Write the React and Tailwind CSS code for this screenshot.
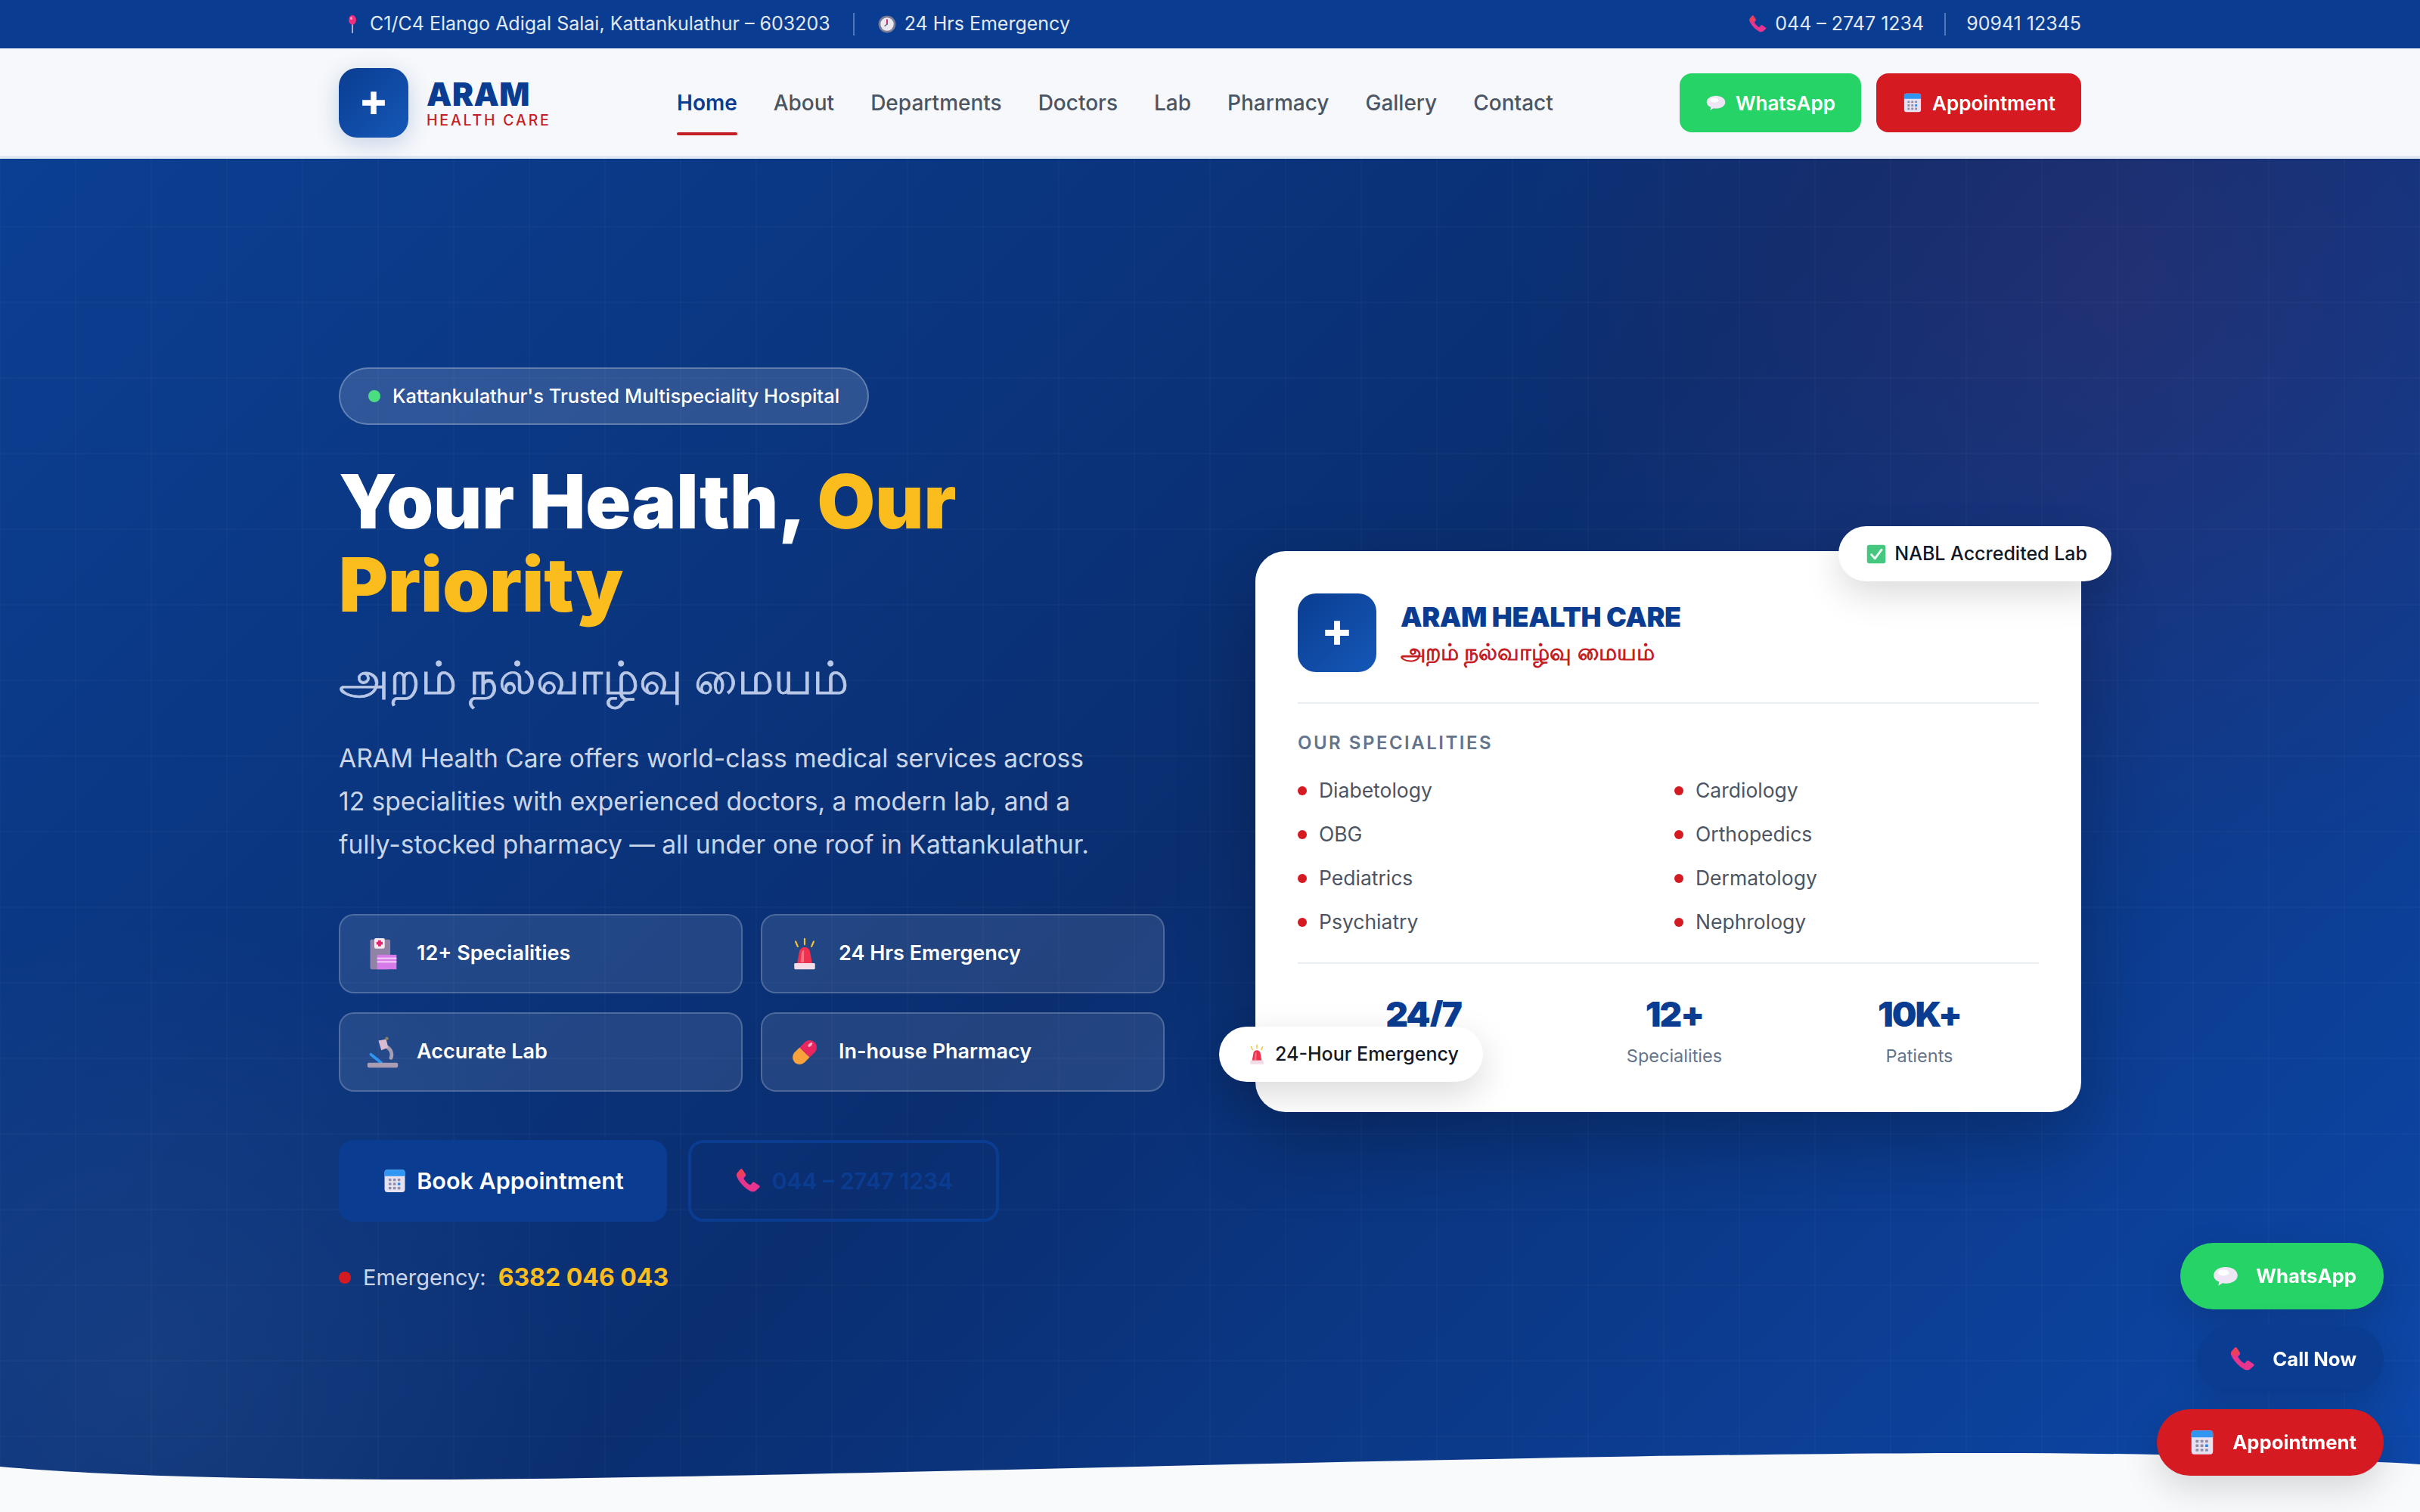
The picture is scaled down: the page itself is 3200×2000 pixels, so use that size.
import React from 'react';

// Emoji-like icons, drawn to match the reference
function PinIcon({ size = 24 }) {
  return (
    <svg width={size} height={size} viewBox="0 0 24 24" className="shrink-0">
      <rect x="11.2" y="9" width="1.6" height="14" rx="0.8" fill="#c9bfd0" />
      <ellipse cx="12" cy="6.8" rx="4.6" ry="5.8" fill="#ef2f7d" />
      <ellipse cx="10.6" cy="4.8" rx="1.4" ry="1.8" fill="#ff9cc2" />
    </svg>
  );
}

function ClockIcon({ size = 24 }) {
  return (
    <svg width={size} height={size} viewBox="0 0 24 24" className="shrink-0">
      <circle cx="12" cy="12" r="10.5" fill="#7a7f96" />
      <circle cx="12" cy="12" r="8" fill="#ece8ef" />
      <path d="M12 12V6.5" stroke="#c2185b" strokeWidth="1.6" strokeLinecap="round" />
      <path d="M12 12l-2.6 2" stroke="#6b6f84" strokeWidth="1.4" strokeLinecap="round" />
    </svg>
  );
}

function PhoneIcon({ size = 24 }) {
  return (
    <svg width={size} height={size} viewBox="0 0 24 24" className="shrink-0">
      <path d="M2.5 5.2 5.4 1.8c.5-.5 1.2-.5 1.6 0l3 4.6c.3.5.2 1-.2 1.4L8.2 9.7c1 2.3 3.6 5 5.9 6l2-2.4c.4-.4 1-.5 1.4-.2l4.5 3.1c.5.4.5 1.1.1 1.6l-3.4 3c-1 .8-2.6 1-4.4.4C9 18.4 3.8 13 2 7.7c-.2-1 0-1.9.5-2.5z" fill="#e8348f" />
      <path d="M2.5 5.2 5.4 1.8c.5-.5 1.2-.5 1.6 0l3 4.6-6 3C2.8 7.8 2 6.5 2.5 5.2z" fill="#ee3f58" />
    </svg>
  );
}

function BubbleIcon({ size = 24 }) {
  return (
    <svg width={size} height={size} viewBox="0 0 24 24" className="shrink-0">
      <path d="M12 4c6 0 10.5 3 10.5 7.3S18 18.5 12 18.5c-1 0-2-.1-2.9-.3L5.5 20.5l.8-3.5C3 15.7 1.5 13.7 1.5 11.3 1.5 7 6 4 12 4z" fill="#efe6f5" />
      <ellipse cx="10" cy="9" rx="5" ry="2.6" fill="#ffffff" />
    </svg>
  );
}

function CalendarIcon({ size = 24 }) {
  const dots = [];
  for (let r = 0; r < 3; r++) {
    for (let c = 0; c < 3; c++) {
      dots.push(
        <rect key={`${r}-${c}`} x={6.3 + c * 4.2} y={9.8 + r * 3.9} width="2.5" height="2.3" rx="0.4" fill={r === 1 && c === 2 ? '#2e86e6' : '#8f8ea6'} />
      );
    }
  }
  return (
    <svg width={size} height={size} viewBox="0 0 24 24" className="shrink-0">
      <rect x="2.5" y="1.5" width="19" height="21" rx="2.6" fill="#e6e1f0" />
      <path d="M2.5 7.5V4.1a2.6 2.6 0 0 1 2.6-2.6h13.8a2.6 2.6 0 0 1 2.6 2.6v3.4z" fill="#2f96f3" />
      {dots}
    </svg>
  );
}

function HospitalIcon({ size = 24 }) {
  return (
    <svg width={size} height={size} viewBox="0 0 24 24" className="shrink-0">
      <rect x="3" y="1.5" width="14.5" height="21.5" rx="1" fill="#8f83a6" />
      <rect x="8" y="12.5" width="14" height="10.5" fill="#d77be8" />
      <rect x="8" y="14.5" width="14" height="1.2" fill="#f2c8f7" />
      <rect x="8" y="17" width="14" height="1.2" fill="#f2c8f7" />
      <rect x="6" y="0.5" width="7.5" height="7.5" rx="1" fill="#f8e8ef" />
      <path d="M8.7 2h2.1v1.2H12v2h-1.2v1.2H8.7V5.2H7.5v-2h1.2z" fill="#e2266f" />
    </svg>
  );
}

function SirenIcon({ size = 24 }) {
  return (
    <svg width={size} height={size} viewBox="0 0 24 24" className="shrink-0">
      <path d="M12 1v4M5.5 3l1.5 3.5M18.5 3 17 6.5" stroke="#f2c230" strokeWidth="1.2" strokeLinecap="round" />
      <path d="M6.5 19 8 11a4 4 0 0 1 8 0l1.5 8z" fill="#f0304f" />
      <path d="M9 18l.8-7a2.500 2.500 0 0 1 1.700-2V18z" fill="#ff6f83" />
      <rect x="4.5" y="18.5" width="15" height="4.5" rx="0.8" fill="#f3dce8" />
    </svg>
  );
}

function MicroscopeIcon({ size = 24 }) {
  return (
    <svg width={size} height={size} viewBox="0 0 24 24" className="shrink-0">
      <path d="M13 7.5a6.2 6.2 0 0 1 5 8.5" stroke="#a99db3" strokeWidth="2.6" fill="none" strokeLinecap="round" />
      <path d="M9 3.5 14.5 2.5 16 8.5 11 10.5z" fill="#d8bcd0" />
      <circle cx="15" cy="2" r="1.2" fill="#8b8066" />
      <path d="M3.5 13.5 11 19.5" stroke="#2f96f3" strokeWidth="2" strokeLinecap="round" />
      <rect x="1" y="19.5" width="22" height="3.5" rx="1" fill="#a99db3" />
    </svg>
  );
}

function PillIcon({ size = 24 }) {
  return (
    <svg width={size} height={size} viewBox="0 0 24 24" className="shrink-0">
      <path d="M8.4 8.4 15.6 15.6 11.8 19.4a5.1 5.1 0 0 1-7.2-7.2z" fill="#f9a23c" />
      <path d="M8.4 8.4 12.2 4.6a5.1 5.1 0 0 1 7.2 7.2L15.6 15.6z" fill="#e9265f" />
      <ellipse cx="16" cy="6.5" rx="1" ry="2" transform="rotate(45 16 6.5)" fill="#ffb3c8" />
    </svg>
  );
}

function CheckIcon({ size = 24 }) {
  return (
    <svg width={size} height={size} viewBox="0 0 24 24" className="shrink-0">
      <rect x="1.5" y="1.5" width="21" height="21" rx="2.5" fill="#46c77f" />
      <path d="M6.5 12.5 10.5 17 18 7" stroke="#f4fff8" strokeWidth="2.4" fill="none" strokeLinecap="round" strokeLinejoin="round" />
    </svg>
  );
}

function Cross({ size = 32 }) {
  return (
    <svg width={size} height={size} viewBox="0 0 32 32">
      <path d="M12.5 2h7v10.5H30v7H19.5V30h-7V19.5H2v-7h10.5z" fill="#ffffff" />
    </svg>
  );
}

const navLinks = ['About', 'Departments', 'Doctors', 'Lab', 'Pharmacy', 'Gallery', 'Contact'];
const specialities = ['Diabetology', 'Cardiology', 'OBG', 'Orthopedics', 'Pediatrics', 'Dermatology', 'Psychiatry', 'Nephrology'];

function Feature({ icon, label }) {
  return (
    <div className="flex h-[105px] items-center gap-[23px] rounded-[20px] border-2 border-white/20 bg-white/10 px-[34px] text-[27px] font-semibold text-white">
      {icon}
      <span>{label}</span>
    </div>
  );
}

function Stat({ value, label }) {
  return (
    <div className="flex flex-col items-center">
      <div className="text-[46px] leading-[60px] font-black tracking-[-2px] text-[#0a3d91]">{value}</div>
      <div className="mt-[8px] text-[23.5px] leading-[36px] text-[#64748b]">{label}</div>
    </div>
  );
}

export default function App() {
  return (
    <div className="relative flex h-[2000px] flex-col overflow-hidden bg-[#f8fafc] font-['Inter','Noto_Sans',sans-serif]">
      {/* Top bar */}
      <div className="h-[64px] shrink-0 bg-[#0a3d91] text-[25px] text-[#e2e8f0]">
        <div className="mx-auto flex h-full w-[2304px] items-center justify-between">
          <div className="flex items-center">
            <span className="flex items-center gap-[10px] pl-[5px]"><PinIcon size={26} />C1/C4 Elango Adigal Salai, Kattankulathur – 603203</span>
            <span className="mx-[30px] h-[30px] w-[2px] bg-white/30" />
            <span className="flex items-center gap-[10px]"><ClockIcon size={26} />24 Hrs Emergency</span>
          </div>
          <div className="flex items-center">
            <span className="flex items-center gap-[10px]"><PhoneIcon size={26} />044 – 2747 1234</span>
            <span className="mx-[27px] h-[30px] w-[2px] bg-white/30" />
            <span>90941 12345</span>
          </div>
        </div>
      </div>

      {/* Nav */}
      <div className="h-[146px] shrink-0 border-b-[4px] border-[#dfe8f3] bg-[#f6f8fb] pt-[2px]">
        <div className="mx-auto flex h-full w-[2304px] items-center">
          <div className="flex w-[447px] items-center gap-[24px]">
            <div className="flex h-[92px] w-[92px] items-center justify-center rounded-[24px] bg-[linear-gradient(135deg,#0a3d91,#1558b8)] shadow-[0_8px_32px_rgba(10,61,145,0.2)]">
              <Cross size={34} />
            </div>
            <div className="pt-[2px]">
              <div className="text-[42px] leading-[44px] font-black tracking-[0.5px] text-[#0a3d91]">ARAM</div>
              <div className="text-[19.5px] leading-[24px] font-medium tracking-[2.8px] text-[#c41e24]">HEALTH CARE</div>
            </div>
          </div>
          <nav className="flex items-center gap-[48px] text-[28px] text-[#4b5563]">
            <a className="relative font-semibold text-[#0a3d91]">
              Home
              <span className="absolute right-0 -bottom-[22px] left-0 h-[4px] rounded-full bg-[#c41e24]" />
            </a>
            {navLinks.map((link) => (
              <a key={link} className="font-medium">{link}</a>
            ))}
          </nav>
          <div className="ml-auto flex items-center gap-[20px] text-[26px] font-semibold text-white">
            <a className="flex h-[78px] w-[240px] items-center justify-center gap-[12px] rounded-[16px] bg-[#25d366]"><BubbleIcon size={28} />WhatsApp</a>
            <a className="flex h-[78px] w-[271px] items-center justify-center gap-[12px] rounded-[16px] bg-[#d61a21]"><CalendarIcon size={28} />Appointment</a>
          </div>
        </div>
      </div>

      {/* Hero */}
      <section className="relative flex flex-1 items-center bg-[linear-gradient(135deg,#0b3f93_0%,#0a2e70_50%,#0d48aa_100%)] pb-[10px]">
        <div className="absolute inset-0 bg-[radial-gradient(circle_at_88%_10%,rgba(196,30,60,0.12),transparent_25%),radial-gradient(circle_at_6%_90%,rgba(255,255,255,0.05),transparent_18%)]" />
        <div className="absolute inset-0 bg-[linear-gradient(rgba(255,255,255,0.02)_2px,transparent_2px),linear-gradient(90deg,rgba(255,255,255,0.02)_2px,transparent_2px)] bg-[size:100px_100px] bg-[position:-1px_-11px]" />

        <div className="relative mx-auto grid w-[2304px] grid-cols-2 items-center gap-[120px]">
          {/* Left column */}
          <div>
            <div className="inline-flex h-[76px] items-center gap-[16px] rounded-full border-2 border-white/25 bg-white/15 px-[37px] text-[25.5px] font-medium text-white">
              <span className="h-[16px] w-[16px] rounded-full bg-[#4ade80]" />
              Kattankulathur's Trusted Multispeciality Hospital
            </div>
            <h1 className="mt-[46px] w-[1000px] text-[99px] leading-[110px] font-black text-white">
              Your Health, <span className="text-[#fbbc1e]">Our Priority</span>
            </h1>
            <div className="mt-[26px] text-[60px] leading-[84px] font-medium text-[#b9c8e6] [-webkit-text-stroke:0.8px_#b9c8e6]">அறம் நல்வாழ்வு மையம்</div>
            <p className="mt-[36px] w-[1000px] text-[33.6px] leading-[57px] text-[#cbd5e8]">
              ARAM Health Care offers world-class medical services across 12 specialities with experienced doctors, a modern lab, and a fully-stocked pharmacy — all under one roof in Kattankulathur.
            </p>
            <div className="mt-[64px] grid grid-cols-2 gap-x-[24px] gap-y-[25px]">
              <Feature icon={<HospitalIcon size={44} />} label="12+ Specialities" />
              <Feature icon={<SirenIcon size={44} />} label="24 Hrs Emergency" />
              <Feature icon={<MicroscopeIcon size={44} />} label="Accurate Lab" />
              <Feature icon={<PillIcon size={44} />} label="In-house Pharmacy" />
            </div>
            <div className="mt-[64px] flex gap-[28px] text-[30.5px] font-semibold">
              <a className="flex h-[108px] w-[434px] items-center justify-center gap-[12px] rounded-[20px] bg-[#0a3d91] text-white"><CalendarIcon size={34} />Book Appointment</a>
              <a className="flex h-[108px] w-[411px] items-center justify-center gap-[14px] rounded-[20px] border-[4px] border-[#0a3d91] text-[30px] text-[#0a3d91]"><PhoneIcon size={36} />044 – 2747 1234</a>
            </div>
            <div className="mt-[50px] flex items-center text-[29px] text-[#cbd5e8]">
              <span className="mr-[16px] h-[16px] w-[16px] rounded-full bg-[#d61a21]" />
              Emergency:
              <span className="ml-[16px] text-[32px] font-bold text-[#fbbc1e]">6382 046 043</span>
            </div>
          </div>

          {/* Right card */}
          <div className="relative rounded-[40px] bg-white p-[56px] shadow-[0_40px_100px_rgba(0,0,0,0.25)]">
            <div className="absolute -top-[33px] -right-[40px] flex h-[73px] items-center gap-[10px] rounded-full bg-white pr-[32px] pl-[36px] text-[25px] font-medium text-[#111827] shadow-[0_16px_48px_rgba(0,0,0,0.15)]">
              <CheckIcon size={28} />
              NABL Accredited Lab
            </div>
            <div className="absolute bottom-[40px] -left-[48px] z-10 flex h-[73px] items-center gap-[10px] rounded-full bg-white pr-[32px] pl-[36px] text-[25px] font-medium text-[#111827] shadow-[0_16px_48px_rgba(0,0,0,0.15)]">
              <SirenIcon size={28} />
              24-Hour Emergency
            </div>

            <div className="flex items-center gap-[32px] border-b-2 border-[#e8eef3] pb-[40px]">
              <div className="flex h-[104px] w-[104px] items-center justify-center rounded-[24px] bg-[linear-gradient(135deg,#0a3d91,#1558b8)]">
                <Cross size={36} />
              </div>
              <div>
                <div className="text-[36px] leading-[48px] font-black tracking-[-0.4px] text-[#0a3d91]">ARAM HEALTH CARE</div>
                <div className="mt-[2px] text-[29.5px] leading-[40px] font-semibold text-[#c41e24]">அறம் நல்வாழ்வு மையம்</div>
              </div>
            </div>

            <div className="mt-[36px] text-[24px] leading-[32px] font-semibold tracking-[2.5px] text-[#64748b]">OUR SPECIALITIES</div>
            <div className="mt-[18px] grid grid-cols-[498px_1fr] border-b-2 border-[#e8eef3] pb-[24px]">
              {specialities.map((item) => (
                <div key={item} className="flex h-[58px] items-center gap-[16px] text-[26.5px] text-[#4b5563]">
                  <span className="h-[12px] w-[12px] rounded-full bg-[#d61a21]" />
                  {item}
                </div>
              ))}
            </div>

            <div className="mt-[36px] grid grid-cols-[332px_332px_316px]">
              <Stat value="24/7" label="Emergency" />
              <Stat value="12+" label="Specialities" />
              <Stat value="10K+" label="Patients" />
            </div>
          </div>
        </div>

        {/* Wave */}
        <svg className="absolute bottom-0 left-0 h-[80px] w-full" viewBox="0 0 3200 80" preserveAspectRatio="none">
          <path d="M0,20 C150,33 350,37 550,37 C1000,37 2000,2 2630,2 C2850,2 3050,8 3200,17 L3200,80 L0,80 Z" fill="#f8fafc" />
        </svg>
      </section>

      {/* Floating actions */}
      <div className="fixed right-[48px] bottom-[48px] z-20 flex flex-col items-end gap-[22px] text-[25.7px] font-bold text-white">
        <a className="flex h-[88px] items-center gap-[22px] rounded-full bg-[#25d366] pr-[36px] pl-[42px] shadow-[0_16px_48px_rgba(0,0,0,0.15)]"><BubbleIcon size={36} />WhatsApp</a>
        <a className="flex h-[88px] items-center gap-[22px] rounded-full bg-[#0a3d91] pr-[36px] pl-[42px] shadow-[0_16px_48px_rgba(0,0,0,0.15)]"><PhoneIcon size={36} />Call Now</a>
        <a className="flex h-[88px] items-center gap-[22px] rounded-full bg-[#d61a21] pr-[36px] pl-[42px] shadow-[0_16px_48px_rgba(0,0,0,0.15)]"><CalendarIcon size={36} />Appointment</a>
      </div>
    </div>
  );
}
